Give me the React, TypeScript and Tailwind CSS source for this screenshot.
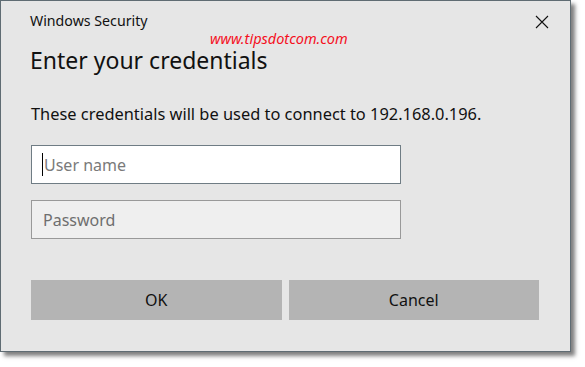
export default function App() {
  return (
    <div className="h-[367px] w-[585px] bg-white" style={{ fontFamily: '"Noto Sans", sans-serif' }}>
      <div className="relative h-[352px] w-[571px] border border-[#5f6c73] bg-[#e6e6e6] shadow-[4px_4px_4px_rgba(0,0,0,0.5)]">
        <div className="flex items-start justify-between pl-[29px] pr-[21px] pt-[9px]">
          <div className="text-[14.2px] leading-[22px] text-[#111]">Windows Security</div>
          <svg width="14" height="14" viewBox="0 0 14 14" className="mt-[5px]">
            <path d="M1 1 L13 13 M13 1 L1 13" stroke="#111" strokeWidth="1.1" fill="none" />
          </svg>
        </div>
        <div className="absolute left-[209px] top-[29px] text-[14.5px] italic leading-[16px] text-[#f5101e]">
          www.tipsdotcom.com
        </div>
        <div className="mt-[13px] pl-[29px] text-[23px] leading-[30px] text-[#111]">Enter your credentials</div>
        <div className="mt-[28px] pl-[30px] text-[16.4px] leading-[22px] text-[#111]">
          These credentials will be used to connect to 192.168.0.196.
        </div>
        <div className="ml-[30px] mt-[20px] flex h-[39px] w-[370px] items-center border border-[#6f7c84] bg-white pl-[10px]">
          <span className="mr-[1px] h-[23px] w-[1px] bg-black" />
          <span className="text-[16px] text-[#7a7a7a]">User name</span>
        </div>
        <div className="ml-[30px] mt-[16px] flex h-[39px] w-[370px] items-center border border-[#999] bg-[#efefef] pl-[11px]">
          <span className="text-[16px] text-[#6e6e6e]">Password</span>
        </div>
        <div className="ml-[30px] mt-[41px] grid w-[508px] grid-cols-2 gap-[7px]">
          <button className="h-[40px] bg-[#b4b4b4] text-[16px] text-[#111]">OK</button>
          <button className="h-[40px] bg-[#b4b4b4] text-[16px] text-[#111]">Cancel</button>
        </div>
      </div>
    </div>
  );
}
